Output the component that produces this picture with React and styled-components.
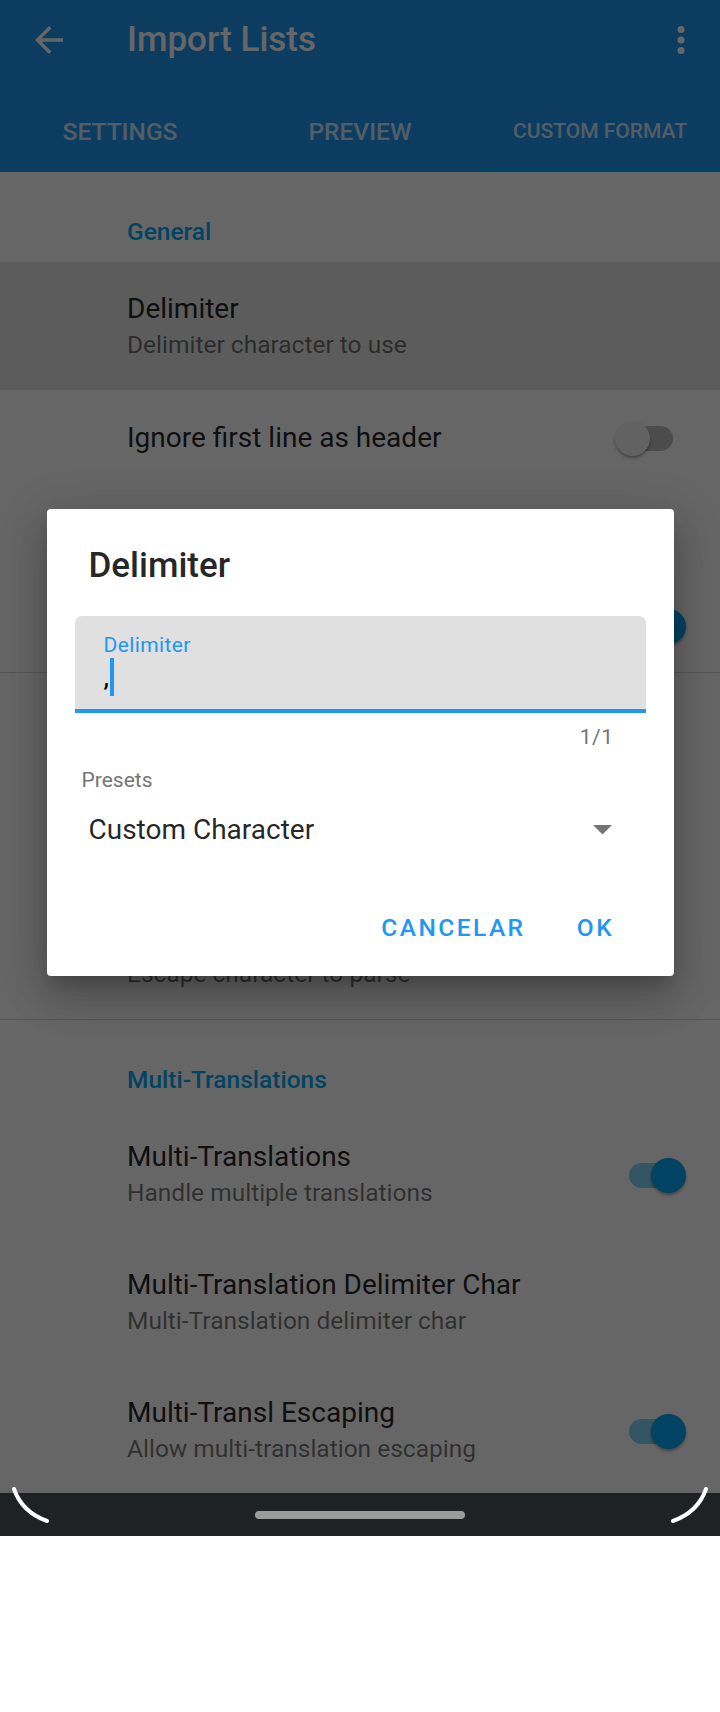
import React from 'react';
import styled, { createGlobalStyle } from 'styled-components';

const accent = '#03A9F4';
const primary = '#2196F3';

const sections = [
  {
    title: 'General',
    divider: true,
    items: [
      { title: 'Delimiter', summary: 'Delimiter character to use', pressed: true },
      { title: 'Ignore first line as header', toggle: false },
      { title: 'Skip empty lines', toggle: false },
      { title: 'Trim whitespace', toggle: true },
    ],
  },
  {
    title: 'Quoting',
    divider: true,
    items: [
      { title: 'Quote Character', summary: 'Quote character to parse' },
      { title: 'Escape Character', summary: 'Escape character to parse' },
    ],
  },
  {
    title: 'Multi-Translations',
    items: [
      { title: 'Multi-Translations', summary: 'Handle multiple translations', toggle: true },
      { title: 'Multi-Translation Delimiter Char', summary: 'Multi-Translation delimiter char' },
      { title: 'Multi-Transl Escaping', summary: 'Allow multi-translation escaping', toggle: true },
    ],
  },
];

function App() {
  return (
    <>
      <GlobalStyle />
      <Page>
        <Screen>
          <Content>
            <AppBar>
              <Toolbar>
                <NavButton>
                  <svg width="42" height="42" viewBox="0 0 24 24" fill="#fff">
                    <path d="M20 11H7.83l5.59-5.59L12 4l-8 8 8 8 1.41-1.41L7.83 13H20v-2z" />
                  </svg>
                </NavButton>
                <Title>Import Lists</Title>
                <MenuButton>
                  <svg width="42" height="42" viewBox="0 0 24 24" fill="#fff">
                    <circle cx="12" cy="6" r="2" />
                    <circle cx="12" cy="12" r="2" />
                    <circle cx="12" cy="18" r="2" />
                  </svg>
                </MenuButton>
              </Toolbar>
              <Tabs>
                <Tab>SETTINGS</Tab>
                <Tab>PREVIEW</Tab>
                <Tab $small $active>CUSTOM FORMAT</Tab>
              </Tabs>
            </AppBar>

            {sections.map((section) => (
              <Section key={section.title} $divider={section.divider}>
                <Category>{section.title}</Category>
                {section.items.map((item) => (
                  <Row key={item.title} $pressed={item.pressed}>
                    <RowText>
                      <RowTitle>{item.title}</RowTitle>
                      {item.summary && <RowSummary>{item.summary}</RowSummary>}
                    </RowText>
                    {item.toggle !== undefined && (
                      <Switch $on={item.toggle}>
                        <Track $on={item.toggle} />
                        <Thumb $on={item.toggle} />
                      </Switch>
                    )}
                  </Row>
                ))}
              </Section>
            ))}
          </Content>

          <NavBar>
            <HomePill />
          </NavBar>

          <Scrim>
            <Dialog>
              <DialogBody>
                <DialogTitle>Delimiter</DialogTitle>
                <Field>
                  <FieldLabel>Delimiter</FieldLabel>
                  <FieldInput>
                    ,<Cursor />
                  </FieldInput>
                </Field>
                <Counter>1/1</Counter>
                <SpinnerLabel>Presets</SpinnerLabel>
                <Spinner>
                  <span>Custom Character</span>
                  <svg width="19" height="10" viewBox="0 0 19 10">
                    <polygon points="0,0 19,0 9.5,9.5" fill="#757575" />
                  </svg>
                </Spinner>
              </DialogBody>
              <Actions>
                <TextButton>CANCELAR</TextButton>
                <TextButton>OK</TextButton>
              </Actions>
            </Dialog>
          </Scrim>

          <Corners width="720" height="60" viewBox="0 0 720 60">
            <path d="M14 9 Q22 32 47 41" />
            <path d="M706 9 Q698 32 673 41" />
          </Corners>
        </Screen>
        <Below />
      </Page>
    </>
  );
}

export default App;

const GlobalStyle = createGlobalStyle`
  html, body {
    margin: 0;
    padding: 0;
    background: #fff;
  }
  body {
    font-family: Roboto, "Noto Sans", sans-serif;
  }
`;

const Page = styled.div`
  width: 720px;
  display: flex;
  flex-direction: column;
`;

const Screen = styled.div`
  position: relative;
  height: 1536px;
  display: flex;
  flex-direction: column;
  overflow: hidden;
`;

const Content = styled.div`
  height: 1493px;
  overflow: hidden;
  background: #fff;
`;

const AppBar = styled.div`
  background: ${primary};
  color: #fff;
`;

const Toolbar = styled.div`
  height: 80px;
  display: flex;
  align-items: center;
`;

const NavButton = styled.div`
  width: 98px;
  height: 80px;
  display: flex;
  align-items: center;
  justify-content: center;
`;

const Title = styled.div`
  flex: 1;
  margin-left: 29px;
  font-size: 35px;
  font-weight: 500;
  line-height: 42px;
`;

const MenuButton = styled.div`
  width: 42px;
  height: 42px;
  margin-right: 18px;
  display: flex;
`;

const Tabs = styled.div`
  display: grid;
  grid-template-columns: repeat(3, 1fr);
  height: 92px;
`;

const Tab = styled.div`
  display: flex;
  align-items: center;
  justify-content: center;
  padding-top: 10px;
  font-size: ${(p) => (p.$small ? '21px' : '24.5px')};
  font-weight: 500;
  color: rgba(255, 255, 255, 0.8);
  box-shadow: ${(p) => (p.$active ? `inset 0 -4px 0 ${accent}` : 'none')};
`;

const Section = styled.div`
  border-bottom: ${(p) => (p.$divider ? '1px solid #d6d6d6' : 'none')};
`;

const Category = styled.div`
  height: 90px;
  box-sizing: border-box;
  padding: 45px 0 0 127px;
  font-size: 24.5px;
  font-weight: 500;
  line-height: 30px;
  color: ${accent};
`;

const Row = styled.div`
  display: flex;
  align-items: center;
  box-sizing: border-box;
  min-height: 94px;
  padding: 29px 34px 27px 127px;
  background: ${(p) => (p.$pressed ? '#e6e6e6' : 'transparent')};
`;

const RowText = styled.div`
  flex: 1;
`;

const RowTitle = styled.div`
  font-size: 28px;
  line-height: 36px;
  color: rgba(0, 0, 0, 0.87);
`;

const RowSummary = styled.div`
  font-size: 24.5px;
  line-height: 36px;
  color: rgba(0, 0, 0, 0.54);
`;

const Switch = styled.div`
  position: relative;
  width: 71px;
  height: 35px;
  display: flex;
  justify-content: ${(p) => (p.$on ? 'flex-end' : 'flex-start')};
`;

const Track = styled.div`
  position: absolute;
  left: 14px;
  top: 5px;
  width: 44px;
  height: 25px;
  border-radius: 13px;
  background: ${(p) => (p.$on ? 'rgba(3, 169, 244, 0.5)' : '#bdbdbd')};
`;

const Thumb = styled.div`
  position: relative;
  width: 35px;
  height: 35px;
  border-radius: 50%;
  background: ${(p) => (p.$on ? accent : '#f5f5f5')};
  box-shadow: 0 2px 3px rgba(0, 0, 0, 0.35);
`;

const NavBar = styled.div`
  height: 43px;
  background: #1f2223;
  display: flex;
  align-items: center;
  justify-content: center;
`;

const HomePill = styled.div`
  width: 210px;
  height: 8px;
  border-radius: 4px;
  background: #9a9c9c;
`;

const Scrim = styled.div`
  position: absolute;
  left: 0;
  top: 0;
  width: 720px;
  height: 1493px;
  box-sizing: border-box;
  padding-bottom: 8px;
  background: rgba(0, 0, 0, 0.6);
  display: flex;
  align-items: center;
  justify-content: center;
`;

const Dialog = styled.div`
  width: 627px;
  background: #fff;
  border-radius: 4px;
  box-shadow: 0 11px 15px -7px rgba(0, 0, 0, 0.2), 0 24px 38px 3px rgba(0, 0, 0, 0.14),
    0 9px 46px 8px rgba(0, 0, 0, 0.12);
`;

const DialogBody = styled.div`
  padding: 36px 28px 0;
`;

const DialogTitle = styled.div`
  padding-left: 14px;
  font-size: 35px;
  font-weight: 500;
  line-height: 42px;
  color: rgba(0, 0, 0, 0.87);
`;

const Field = styled.div`
  margin-top: 29px;
  height: 97px;
  box-sizing: border-box;
  padding: 17px 29px 0;
  background: #e0e0e0;
  border-radius: 7px 7px 0 0;
  border-bottom: 4px solid ${primary};
`;

const FieldLabel = styled.div`
  font-size: 21px;
  line-height: 24px;
  letter-spacing: 0.4px;
  color: ${primary};
`;

const FieldInput = styled.div`
  margin-top: 1px;
  display: flex;
  font-size: 28px;
  line-height: 38px;
  color: #000;
`;

const Cursor = styled.span`
  width: 4px;
  height: 38px;
  margin-left: 1px;
  background: ${primary};
`;

const Counter = styled.div`
  margin-top: 12px;
  padding-right: 32px;
  text-align: right;
  font-size: 21px;
  line-height: 24px;
  letter-spacing: 0.5px;
  color: #757575;
`;

const SpinnerLabel = styled.div`
  margin-top: 19px;
  padding-left: 7px;
  font-size: 21px;
  line-height: 24px;
  color: #757575;
`;

const Spinner = styled.div`
  margin-top: 19px;
  display: flex;
  align-items: center;
  justify-content: space-between;
  padding: 0 34px 0 14px;
  font-size: 28px;
  line-height: 38px;
  color: rgba(0, 0, 0, 0.87);
`;

const Actions = styled.div`
  display: flex;
  justify-content: flex-end;
  margin-top: 47px;
  padding: 0 22px 17px;
`;

const TextButton = styled.button`
  height: 63px;
  min-width: 112px;
  padding: 0 14px;
  border: none;
  background: none;
  font-family: inherit;
  font-size: 24.5px;
  font-weight: 500;
  letter-spacing: 2.45px;
  color: ${primary};
`;

const Corners = styled.svg`
  position: absolute;
  left: 0;
  bottom: -4px;
  fill: none;
  stroke: #fff;
  stroke-width: 4;
  stroke-linecap: round;
`;

const Below = styled.div`
  height: 176px;
  background: #fff;
`;
